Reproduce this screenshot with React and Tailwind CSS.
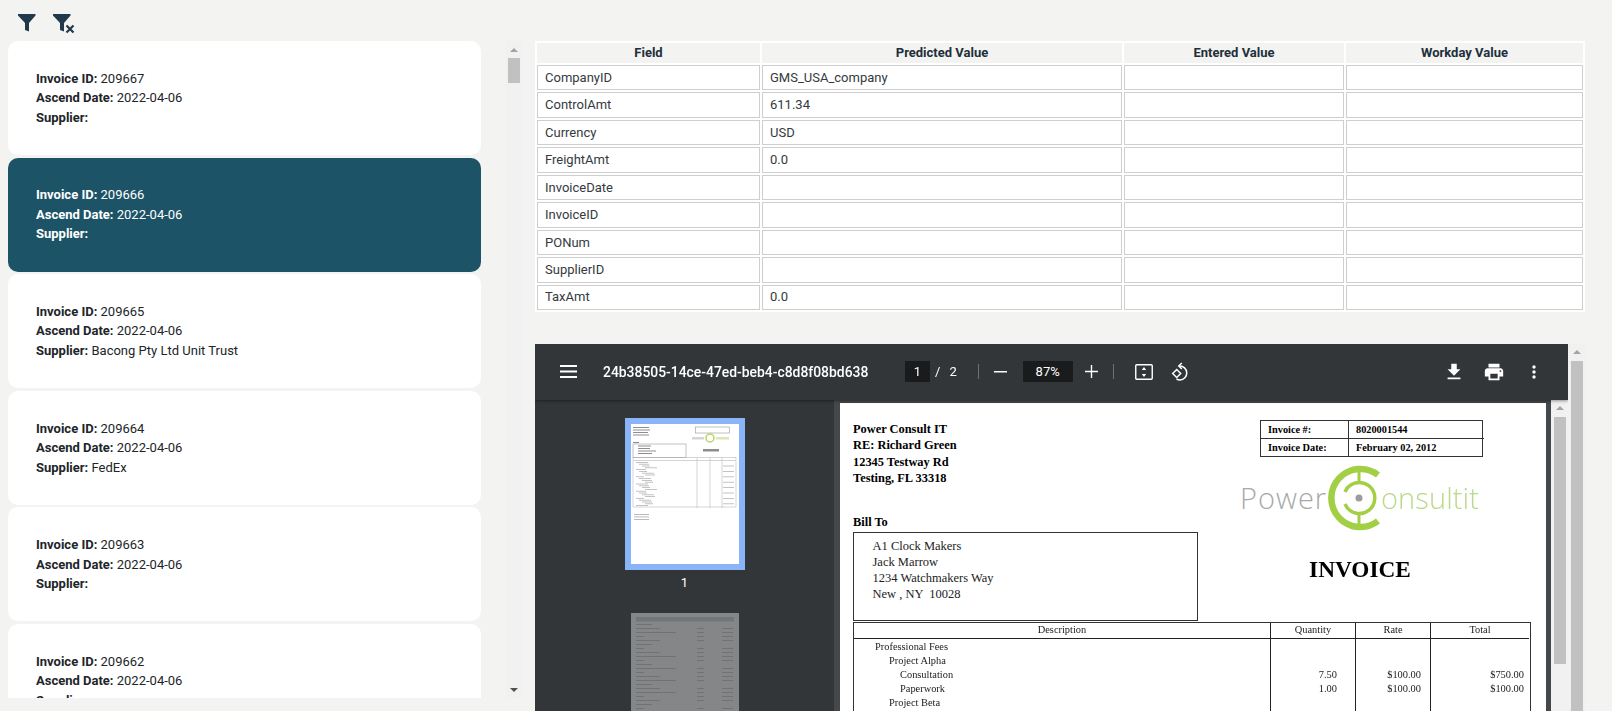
const INVOICES = [
  { id: '209667', supplier: '' },
  { id: '209666', supplier: '', selected: true },
  { id: '209665', supplier: 'Bacong Pty Ltd Unit Trust' },
  { id: '209664', supplier: 'FedEx' },
  { id: '209663', supplier: '' },
  { id: '209662', supplier: '' },
]

const FIELDS = [
  ['CompanyID', 'GMS_USA_company'],
  ['ControlAmt', '611.34'],
  ['Currency', 'USD'],
  ['FreightAmt', '0.0'],
  ['InvoiceDate', ''],
  ['InvoiceID', ''],
  ['PONum', ''],
  ['SupplierID', ''],
  ['TaxAmt', '0.0'],
]

const LINE_ITEMS = [
  { label: 'Professional Fees', indent: 'pl-[21px]' },
  { label: 'Project Alpha', indent: 'pl-[35px]' },
  { label: 'Consultation', indent: 'pl-[46px]', qty: '7.50', rate: '$100.00', total: '$750.00' },
  { label: 'Paperwork', indent: 'pl-[46px]', qty: '1.00', rate: '$100.00', total: '$100.00' },
  { label: 'Project Beta', indent: 'pl-[35px]' },
]

function FilterIcon() {
  return (
    <svg width="18" height="18" viewBox="0 0 18 18" fill="#21394b">
      <path d="M0 0H17.500V1.500L11 9V17.500L7 16V9L0 1.500Z" />
    </svg>
  )
}

function ClearFilterIcon() {
  return (
    <svg width="22" height="20" viewBox="0 0 22 20" fill="#21394b">
      <path d="M0 0H17.500V1.500L11 9V17.500L7 16V9L0 1.500Z" />
      <path d="M13.500 11.500l7 7m0-7l-7 7" stroke="#21394b" strokeWidth="2.200" fill="none" />
    </svg>
  )
}

function Scrollbar({ className, thumb, down }) {
  return (
    <div className={`flex flex-col items-center bg-[#f1f1f1] shrink-0 ${className}`}>
      <div className="h-[17px] flex items-center justify-center shrink-0">
        <div className="w-0 h-0 border-x-[4px] border-x-transparent border-b-[4px] border-b-[#a3a3a3]" />
      </div>
      <div className={`w-[12px] bg-[#c1c1c1] ${thumb}`} />
      {down && (
        <div className="mt-auto h-[17px] flex items-center justify-center shrink-0">
          <div className="w-0 h-0 border-x-[4px] border-x-transparent border-t-[4px] border-t-[#505050]" />
        </div>
      )}
    </div>
  )
}

function InvoiceCard({ invoice }) {
  const tone = invoice.selected ? 'bg-[#1c5367] text-white' : 'bg-white text-[#212529]'
  return (
    <div className={`h-[114px] shrink-0 rounded-[10px] pl-[28px] flex flex-col justify-center text-[13px] leading-[19.5px] ${tone}`}>
      <div><b className="font-bold">Invoice ID:</b> {invoice.id}</div>
      <div><b className="font-bold">Ascend Date:</b> 2022-04-06</div>
      <div className="h-[19.5px]"><b className="font-bold">Supplier:</b> {invoice.supplier}</div>
    </div>
  )
}

function FieldTable() {
  return (
    <div className="grid grid-cols-[223px_360px_220px_237px] grid-rows-[20px_repeat(9,25.45px)] gap-[2px] p-[2px] bg-white w-[1050px] text-[13px] text-[#343a40]">
      {['Field', 'Predicted Value', 'Entered Value', 'Workday Value'].map(h => (
        <div key={h} className="bg-[#f3f3f2] flex items-center justify-center font-bold text-[#212f3a]">{h}</div>
      ))}
      {FIELDS.map(([field, value]) => (
        <div key={field} className="contents">
          <div className="border border-[#cfcfcf] pl-[7px] flex items-center">{field}</div>
          <div className="border border-[#cfcfcf] pl-[7px] flex items-center">{value}</div>
          <div className="border border-[#cfcfcf]" />
          <div className="border border-[#cfcfcf]" />
        </div>
      ))}
    </div>
  )
}

function ToolbarSep() {
  return <div className="w-px h-[15px] bg-[#6f7275]" />
}

function PdfToolbar() {
  return (
    <div className="h-[56px] bg-[#323639] flex items-center text-white shrink-0 relative z-10 shadow-[0_1px_3px_rgba(0,0,0,0.4)]">
      <svg className="ml-[25px]" width="17" height="13" viewBox="0 0 17 13" fill="#fff">
        <path d="M0 0h17v2H0zM0 5.500h17v2H0zM0 11h17v2H0z" />
      </svg>
      <div className="ml-[26px] w-[266px] text-[13.9px] font-medium whitespace-nowrap">24b38505-14ce-47ed-beb4-c8d8f08bd638</div>
      <div className="ml-[36px] w-[25px] h-[21px] bg-[#191b1c] text-[13px] flex items-center justify-center">1</div>
      <span className="ml-[5px] text-[13px]">/</span>
      <span className="ml-[9px] text-[13px]">2</span>
      <div className="ml-[21px]"><ToolbarSep /></div>
      <svg className="ml-[15px]" width="13" height="2" viewBox="0 0 13 2" fill="#fff"><path d="M0 0h13v1.500H0z" /></svg>
      <div className="ml-[16px] w-[50px] h-[21px] bg-[#191b1c] text-[13px] flex items-center justify-center">87%</div>
      <svg className="ml-[12px]" width="13" height="13" viewBox="0 0 13 13" fill="#fff"><path d="M5.800 0h1.400v5.800H13v1.400H7.200V13H5.800V7.200H0V5.800h5.800z" /></svg>
      <div className="ml-[15px]"><ToolbarSep /></div>
      <svg className="ml-[21px]" width="18" height="16" viewBox="0 0 18 16" fill="none">
        <rect x="0.750" y="0.750" width="16.500" height="14.500" rx="1" stroke="#fff" strokeWidth="1.400" />
        <path d="M9 3l2.200 3H6.800zM9 13l2.200-3H6.800z" fill="#fff" />
      </svg>
      <svg className="ml-[17px]" width="20" height="20" viewBox="0 0 20 20" fill="none" stroke="#fff" strokeWidth="1.500">
        <path d="M6.700 7.500l4 4-4 4-4-4z" />
        <path d="M9.500 4a7 7 0 1 1 .5 14c-1.600 0-2.600-.5-3.500-1.200" />
        <path d="M11.800 1L8.800 4l3 3" />
      </svg>
      <svg className="ml-auto" width="22" height="22" viewBox="0 0 24 24" fill="#fff">
        <path d="M19 9h-4V3H9v6H5l7 7 7-7zM5 18v2h14v-2H5z" />
      </svg>
      <svg className="ml-[18px]" width="22" height="22" viewBox="0 0 24 24" fill="#fff">
        <path d="M19 8H5c-1.660 0-3 1.340-3 3v6h4v4h12v-4h4v-6c0-1.660-1.340-3-3-3zm-3 11H8v-5h8v5zm3-7c-.550 0-1-.450-1-1s.450-1 1-1 1 .450 1 1-.450 1-1 1zm-1-9H6v4h12V3z" />
      </svg>
      <svg className="ml-[27px] mr-[32px]" width="4" height="14" viewBox="0 0 4 14" fill="#fff">
        <circle cx="2" cy="2" r="1.700" /><circle cx="2" cy="7" r="1.700" /><circle cx="2" cy="12" r="1.700" />
      </svg>
    </div>
  )
}

// thumbnails are just greeked lines, the page text is too small to read there
function FirstThumb() {
  const rows = Array.from({ length: 25 }, (_, i) => i)
  return (
    <svg width="108" height="140" viewBox="0 0 108 140" className="bg-white block">
      <g fill="#8b8d90">
        <rect x="2" y="3" width="16" height="1" />
        <rect x="2" y="5.500" width="17" height="1" />
        <rect x="2" y="8" width="15" height="1" />
        <rect x="2" y="10.500" width="16" height="1" />
        <rect x="2" y="18" width="6" height="1" />
        <rect x="7" y="21.500" width="13" height="1" />
        <rect x="7" y="24" width="12" height="1" />
        <rect x="7" y="26.500" width="18" height="1" />
        <rect x="7" y="29" width="14" height="1" />
        <rect x="72" y="25" width="16" height="2.500" />
      </g>
      <rect x="64.500" y="3" width="34" height="6" fill="none" stroke="#a5a5a5" strokeWidth="0.700" />
      <rect x="2" y="20" width="53" height="13.500" fill="none" stroke="#999" strokeWidth="0.600" />
      <circle cx="79" cy="14" r="4" fill="none" stroke="#b6d55c" strokeWidth="1.500" />
      <rect x="61" y="13" width="12" height="2.500" fill="#d5d5d5" />
      <rect x="85" y="13" width="13" height="2.500" fill="#dbe8b4" />
      <rect x="2" y="33.500" width="103" height="3" fill="none" stroke="#aaa" strokeWidth="0.500" />
      <path d="M2 37v46h103V37M66 34v50M79 34v50M91 34v50" fill="none" stroke="#bbb" strokeWidth="0.600" />
      {rows.map(i => (
        <rect key={i} x={5 + (i % 4) * 3} y={38 + i * 1.800} width={12 - (i % 3) * 2} height="0.800" fill="#b5b5b5" />
      ))}
      {rows.filter(i => i % 3 === 2).map(i => (
        <rect key={i} x="92" y={38 + i * 1.800} width="11" height="0.800" fill="#b5b5b5" />
      ))}
      <rect x="3" y="90" width="15" height="0.800" fill="#a9a9a9" />
      <rect x="3" y="92.500" width="15" height="0.800" fill="#a9a9a9" />
      <rect x="3" y="95" width="15" height="0.800" fill="#a9a9a9" />
    </svg>
  )
}

function SecondThumb() {
  const rows = Array.from({ length: 26 }, (_, i) => i)
  return (
    <svg width="108" height="120" viewBox="0 0 108 120" className="bg-[#858688] block shrink-0">
      <rect x="5" y="4" width="98" height="4.500" fill="#747577" />
      {rows.map(i => (
        <g key={i} fill="#6f7072">
          <rect x="5" y={11 + i * 4} width={i % 5 === 0 ? 16 : 8 + (i % 3) * 16} height="0.900" />
          {i % 5 !== 0 && <rect x="66" y={11 + i * 4} width="7" height="0.900" />}
          {i % 5 !== 0 && <rect x="91" y={11 + i * 4} width="11" height="0.900" />}
        </g>
      ))}
    </svg>
  )
}

function PdfSidebar() {
  return (
    <div className="w-[299px] shrink-0 bg-[#323639] pt-[18px] flex flex-col items-center overflow-hidden">
      <div className="border-[6px] border-[#8ab4f8]"><FirstThumb /></div>
      <div className="mt-[3px] h-[20px] text-white text-[13px] flex items-center">1</div>
      <div className="mt-[21px]"><SecondThumb /></div>
    </div>
  )
}

function PowerLogo() {
  return (
    <div className="flex items-center h-[66px] w-[240px] -ml-[20px] mt-[8px] font-['Open_Sans',sans-serif] text-[29px] font-light leading-none whitespace-nowrap">
      <span className="w-[81px] text-[#a9a9a9] tracking-[1px]">Power</span>
      <svg className="ml-[6px] shrink-0" width="64" height="66" viewBox="0 0 64 66" fill="none">
        <path d="M51 10A29 29 0 1 0 51 56" stroke="#a3cf45" strokeWidth="6.500" />
        <path d="M18 27A15.500 15.500 0 1 1 18 39" stroke="#a3cf45" strokeWidth="3.500" />
        <path d="M32 4v14M32 48v14" stroke="#a3cf45" strokeWidth="3" />
        <circle cx="32" cy="33" r="3.500" fill="#9c9c9c" />
      </svg>
      <span className="-ml-[10px] text-[#bcd98a] tracking-[0.100px]">onsultit</span>
    </div>
  )
}

function InvoicePage() {
  return (
    <div className="w-[706px] shrink-0 mt-[3px] bg-white px-[13px] font-['Liberation_Serif',serif] text-black blur-[0.4px]">
      <div className="flex h-[219px]">
        <div className="w-[345px] shrink-0 pt-[18px]">
          <div className="text-[12.4px] font-bold leading-[16.400px]">
            <div>Power Consult IT</div>
            <div>RE: Richard Green</div>
            <div>12345 Testway Rd</div>
            <div>Testing, FL 33318</div>
          </div>
          <div className="mt-[27px] text-[12.4px] font-bold leading-[16px]">Bill To</div>
          <div className="mt-[2px] h-[89px] border-[1.500px] border-[#333] pl-[18.500px] pt-[5px] text-[12.5px] leading-[16px] text-[#222] whitespace-pre">
            <div>A1 Clock Makers</div>
            <div>Jack Marrow</div>
            <div>1234 Watchmakers Way</div>
            <div>New , NY  10028</div>
          </div>
        </div>
        <div className="ml-[62px] w-[223px] shrink-0 pt-[17px]">
          <div className="grid grid-cols-[88px_135px] border-[1.500px] border-[#333] text-[10.300px] font-bold leading-[17px] h-[37px]">
            <div className="pl-[7px] border-r-[1.500px] border-b-[1.500px] border-[#333]">Invoice #:</div>
            <div className="pl-[7px] border-b-[1.500px] border-[#333]">8020001544</div>
            <div className="pl-[7px] border-r-[1.500px] border-[#333]">Invoice Date:</div>
            <div className="pl-[7px]">February 02, 2012</div>
          </div>
          <PowerLogo />
          <div className="mt-[25px] pr-[23px] text-center text-[23.3px] font-bold leading-[26px]">INVOICE</div>
        </div>
      </div>
      <div className="w-[678px] grid grid-cols-[416px_85px_75px_99px] border-[1.500px] border-[#333] border-b-0 text-[10.4px] leading-[14px] text-[#222]">
        <div className="h-[16px] border-b-[1.500px] border-[#222] text-center">Description</div>
        <div className="h-[16px] border-b-[1.500px] border-l-[1.500px] border-[#222] text-center">Quantity</div>
        <div className="h-[16px] border-b-[1.500px] border-l-[1.500px] border-[#222] text-center">Rate</div>
        <div className="h-[16px] border-b-[1.500px] border-l-[1.500px] border-[#222] text-center">Total</div>
        <div className="pt-[1px] h-[80px]">
          {LINE_ITEMS.map(item => <div key={item.label} className={item.indent}>{item.label}</div>)}
        </div>
        <div className="pt-[1px] border-l-[1.500px] border-[#222] text-right pr-[18px]">
          {LINE_ITEMS.map(item => <div key={item.label} className="h-[14px]">{item.qty}</div>)}
        </div>
        <div className="pt-[1px] border-l-[1.500px] border-[#222] text-right pr-[9px]">
          {LINE_ITEMS.map(item => <div key={item.label} className="h-[14px]">{item.rate}</div>)}
        </div>
        <div className="pt-[1px] border-l-[1.500px] border-[#222] text-right pr-[5px]">
          {LINE_ITEMS.map(item => <div key={item.label} className="h-[14px]">{item.total}</div>)}
        </div>
      </div>
    </div>
  )
}

function PdfViewer() {
  return (
    <div className="w-[1033px] h-[367px] flex flex-col shrink-0 overflow-hidden">
      <PdfToolbar />
      <div className="flex flex-1 min-h-0">
        <PdfSidebar />
        <div className="flex-1 flex bg-[#44484b] pl-[6px] overflow-hidden">
          <InvoicePage />
          <div className="w-[5px]" />
          <Scrollbar className="w-[17px]" thumb="h-[247px]" />
        </div>
      </div>
    </div>
  )
}

export default function App() {
  return (
    <div className="w-[1612px] h-[711px] bg-[#f3f3f2] overflow-hidden font-['Roboto',sans-serif]">
      <div className="h-[41px] pl-[18px] pt-[14px] flex items-start gap-[17px]">
        <FilterIcon />
        <ClearFilterIcon />
      </div>

      <div className="flex h-[657px]">
        {/* Invoice list */}
        <div className="ml-2 w-[473px] shrink-0 flex flex-col gap-[2.6px] overflow-hidden">
          {INVOICES.map(inv => <InvoiceCard key={inv.id} invoice={inv} />)}
        </div>
        <Scrollbar className="ml-[25px] w-[16px]" thumb="h-[25px]" down />

        {/* Right side */}
        <div className="ml-[13px] w-[1050px] shrink-0">
          <FieldTable />
          <div className="mt-[32px] flex">
            <PdfViewer />
            <Scrollbar className="w-[17px] h-[367px]" thumb="flex-1" />
          </div>
        </div>
      </div>
    </div>
  )
}
